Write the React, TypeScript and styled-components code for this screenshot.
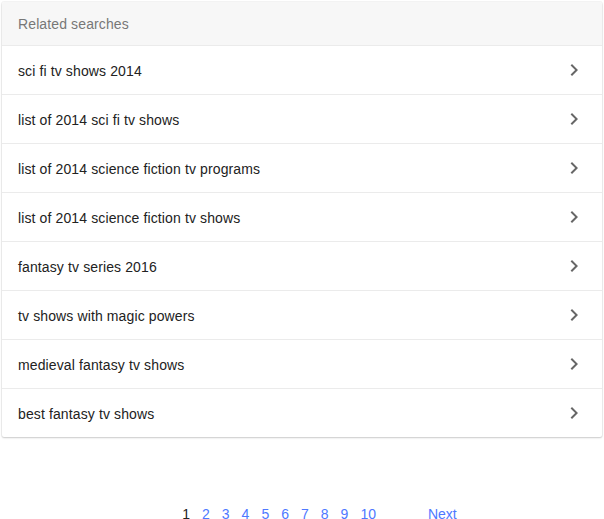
import React from "react";
import styled, { createGlobalStyle } from "styled-components";

const Global = createGlobalStyle`
  html, body { margin: 0; padding: 0; background: #fff; }
  body { font-family: Arial, "Liberation Sans", sans-serif; }
`;

const Page = styled.div`
  padding: 2px 2px 0 2px;
  width: 600px;
`;

const Card = styled.div`
  background: #fff;
  border-radius: 2px;
  box-shadow: 0 1px 2px rgba(0, 0, 0, 0.18), 0 0 0 1px rgba(0, 0, 0, 0.04);
  overflow: hidden;
`;

const Header = styled.div`
  height: 43px;
  display: flex;
  align-items: center;
  padding: 0 16px;
  background: #f7f7f7;
  color: #777;
  font-size: 14px;
  letter-spacing: 0.12px;
`;

const Row = styled.a`
  height: 48px;
  display: flex;
  align-items: center;
  justify-content: space-between;
  padding: 0 16px;
  border-top: 1px solid #ebebeb;
  color: #222;
  font-size: 14px;
  text-decoration: none;
  cursor: pointer;
`;

const Label = styled.span`
  padding-top: 2px;
  letter-spacing: 0.12px;
`;

const Chevron = styled.svg`
  width: 24px;
  height: 24px;
  fill: #676767;
`;

const Nav = styled.nav`
  display: flex;
  justify-content: center;
  align-items: center;
  margin-top: 69px;
  font-size: 14px;
  line-height: 16px;
`;

const Spacer = styled.span`
  visibility: hidden;
  width: 29px;
`;

const Pages = styled.div`
  display: flex;
`;

const PageLink = styled.a<{ $current?: boolean }>`
  margin: 0 6px;
  color: ${(p) => (p.$current ? "#222" : "#4e78ff")};
  text-decoration: none;
`;

const Next = styled.a`
  margin-left: 46px;
  color: #4e78ff;
  text-decoration: none;
`;

const items = [
  "sci fi tv shows 2014",
  "list of 2014 sci fi tv shows",
  "list of 2014 science fiction tv programs",
  "list of 2014 science fiction tv shows",
  "fantasy tv series 2016",
  "tv shows with magic powers",
  "medieval fantasy tv shows",
  "best fantasy tv shows",
];

export default function App() {
  return (
    <>
      <Global />
      <Page>
        <Card>
          <Header>Related searches</Header>
          {items.map((t) => (
            <Row key={t}>
              <Label>{t}</Label>
              <Chevron viewBox="0 0 24 24">
                <path d="M10 6L8.59 7.41 13.17 12l-4.58 4.59L10 18l6-6z" />
              </Chevron>
            </Row>
          ))}
        </Card>
        <Nav>
          <Spacer>Prev</Spacer>
          <Pages>
            {[1, 2, 3, 4, 5, 6, 7, 8, 9, 10].map((n) => (
              <PageLink key={n} $current={n === 1}>
                {n}
              </PageLink>
            ))}
          </Pages>
          <Next>Next</Next>
        </Nav>
      </Page>
    </>
  );
}
